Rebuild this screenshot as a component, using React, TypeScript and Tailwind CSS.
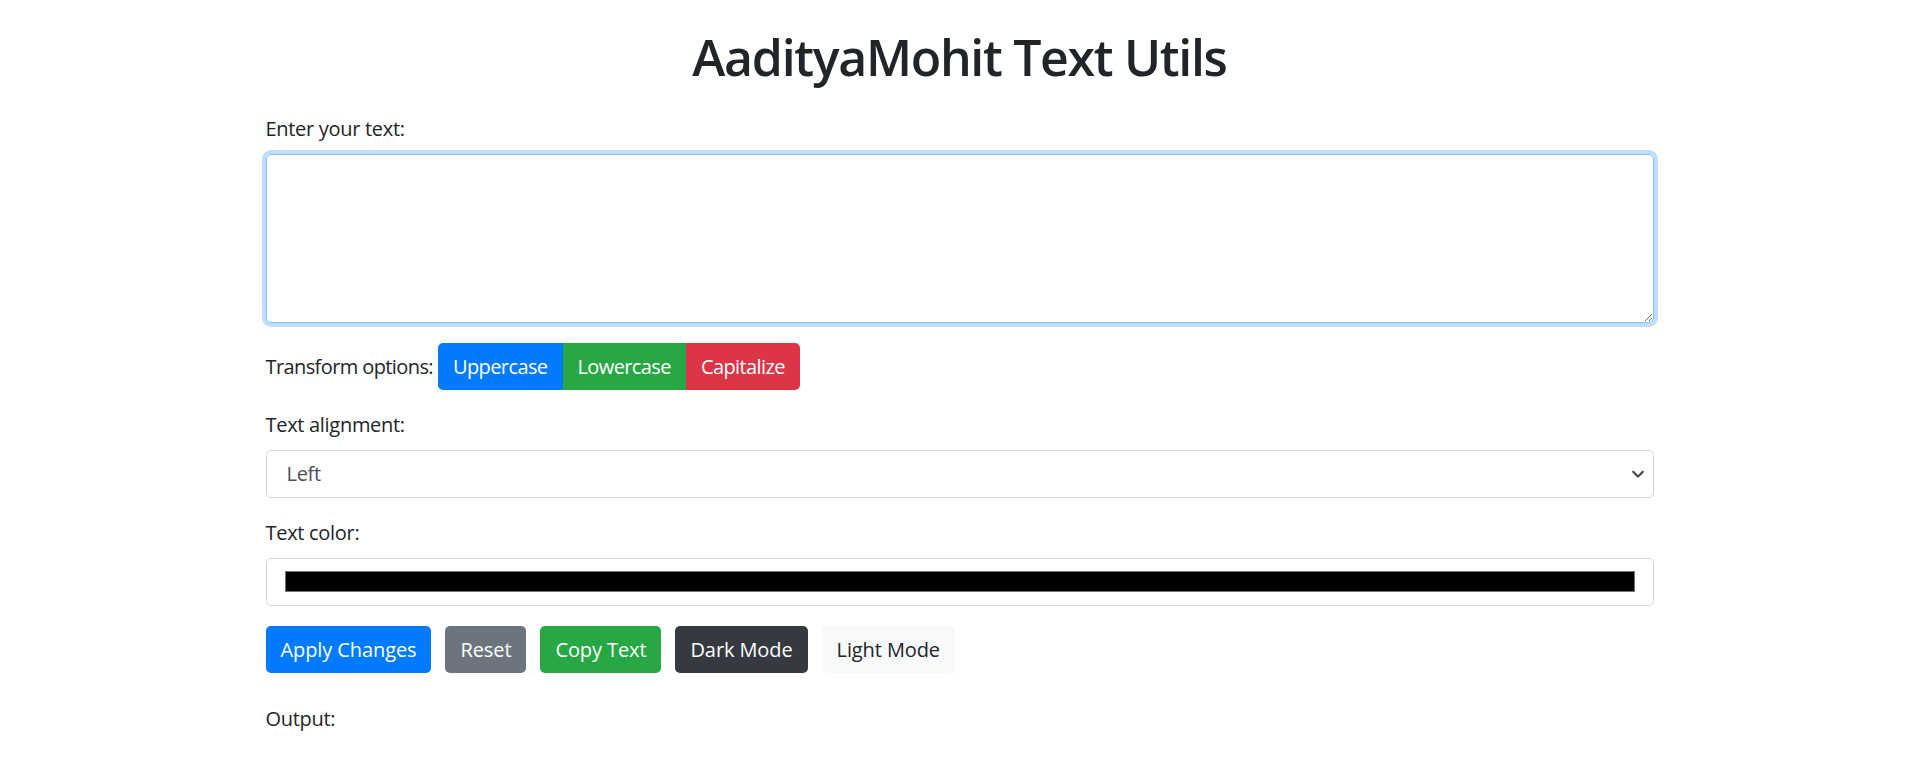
import { useState } from 'react';

export default function App() {
  const [text, setText] = useState('');
  const [align, setAlign] = useState('left');

  return (
    <div className="min-h-screen bg-white text-[#212529] font-['Open_Sans',sans-serif] text-[20px] leading-[30px] tracking-[-0.3px]">
      <div className="w-[1388px] mx-auto">
        <h1 className="pt-[27px] h-[87px] text-center text-[50px] leading-[60px] font-semibold tracking-[-1.3px]">
          AadityaMohit Text Utils
        </h1>

        <div className="mt-[27px] mb-[20px]">
          <label className="block mb-[10px]">Enter your text:</label>
          <textarea
            value={text}
            onChange={(e) => setText(e.target.value)}
            className="block w-full h-[169px] px-[15px] py-[8px] rounded-[5px] border border-[#80bdff] shadow-[0_0_0_4px_rgba(0,123,255,0.25)] outline-none text-[#495057]"
          />
        </div>

        <div className="flex items-center mb-[20px] tracking-[-0.6px]">
          <span className="mr-[5px]">Transform options:</span>
          <div className="flex">
            <button className="h-[47px] px-[15px] bg-[#007bff] text-white rounded-l-[5px]">Uppercase</button>
            <button className="h-[47px] px-[15px] bg-[#28a745] text-white">Lowercase</button>
            <button className="h-[47px] px-[15px] bg-[#dc3545] text-white rounded-r-[5px]">Capitalize</button>
          </div>
        </div>

        <div className="mb-[20px]">
          <label className="block mb-[10px]">Text alignment:</label>
          <div className="relative">
            <select
              value={align}
              onChange={(e) => setAlign(e.target.value)}
              className="block w-full h-[48px] pl-[20px] pr-[40px] appearance-none rounded-[5px] border border-[#ced4da] bg-white text-[#495057] outline-none"
            >
              <option value="left">Left</option>
              <option value="center">Center</option>
              <option value="right">Right</option>
            </select>
            <svg className="absolute right-[9px] top-[17px] w-[14px] h-[14px] pointer-events-none" viewBox="0 0 16 16" fill="none">
              <path d="M2.5 5.5L8 11l5.5-5.5" stroke="#3d4248" strokeWidth="2.4" strokeLinecap="round" strokeLinejoin="round" />
            </svg>
          </div>
        </div>

        <div className="mb-[20px]">
          <label className="block mb-[10px]">Text color:</label>
          <div className="h-[48px] rounded-[5px] border border-[#ced4da] bg-white px-[18px] pt-[12px]">
            <div className="h-[21px] bg-black border border-[#767676]" />
          </div>
        </div>

        <div className="flex gap-[14px] tracking-[-0.1px]">
          <button className="h-[47px] px-[15px] rounded-[5px] bg-[#007bff] text-white">Apply Changes</button>
          <button className="h-[47px] px-[15px] rounded-[5px] bg-[#6c757d] text-white">Reset</button>
          <button className="h-[47px] px-[15px] rounded-[5px] bg-[#28a745] text-white">Copy Text</button>
          <button className="h-[47px] px-[15px] rounded-[5px] bg-[#343a40] text-white">Dark Mode</button>
          <button className="h-[47px] px-[15px] rounded-[5px] bg-[#f8f9fa] text-[#212529]">Light Mode</button>
        </div>

        <div className="mt-[31px]">
          <p>Output:</p>
        </div>
      </div>
    </div>
  );
}
